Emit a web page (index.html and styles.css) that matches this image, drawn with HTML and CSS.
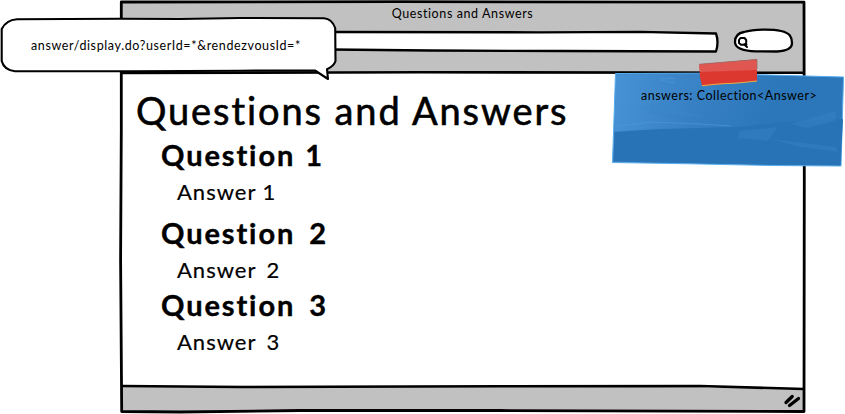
FILE: index.html
```html
<!DOCTYPE html>
<html lang="en">
<head>
<meta charset="utf-8">
<title>Questions and Answers</title>
<link rel="stylesheet" href="styles.css">
</head>
<body>
<main class="mockup">
  <section class="window">
    <svg class="frame" viewBox="0 0 845 414" aria-hidden="true">
      <path fill="#fff" d="M121 2H804V411L122 412Z"/>
      <path fill="#c1c1c1" d="M121 2H804V73H121Z M122 386L500 385.5L804 389V411L122 411Z"/>
      <g fill="none" stroke="#000" stroke-width="2.8" stroke-linejoin="round">
        <path d="M121.3 2L400 1.7L804 2.2L804.3 180L804 411.5L500 410.5L300 410.5L180 412L121.7 411.5L120.6 260L121.3 130Z"/>
        <path stroke-width="2.6" d="M121 73L420 72.3L804 72.8"/>
        <path stroke-width="2.6" d="M122 386L240 387L500 386.2L700 386L804 389"/>
      </g>
      <path fill="#fff" stroke="#000" stroke-width="2.3" stroke-linejoin="round" d="M180 32L330 32L540 32.3L640 31.8L716 33.5Q719 42 716 51.5L560 51L430 50.5L330 49.5L180 49Z"/>
      <path fill="#fff" stroke="#000" stroke-width="2.3" d="M744 32C754 29 772 29 781 31C790 33 792 37 792 43C792 49 786 51 777 51.5L756 51.3C744 51 735 49 735 42C735 37 738 33 744 32Z"/>
      <g fill="none" stroke="#000" stroke-width="2" stroke-linecap="round" stroke-linejoin="round">
        <path d="M740.5 38H744.5L746.2 40V43L744.2 44.7H741L739 43V40ZM743.5 44.5H746.5M744.8 45L747 47"/>
        <path stroke-width="3.3" d="M786 402.5L792.2 396.5M789.5 405.5L798.5 398.5"/>
      </g>
    </svg>
    <header class="toolbar"><p class="caption">Questions and Answers</p></header>
    <article class="content">
      <h1 class="title">Questions and Answers</h1>
      <h2 class="question">Question <span class="digit">1</span></h2>
      <p class="answer">Answer 1</p>
      <h2 class="question second">Question <span class="digit wide">2</span></h2>
      <p class="answer">Answer <span class="digit">2</span></p>
      <h2 class="question third">Question <span class="digit wide">3</span></h2>
      <p class="answer">Answer <span class="digit">3</span></p>
    </article>
  </section>
  <aside class="callout">
    <svg class="shape" viewBox="0 0 340 84" aria-hidden="true">
      <path fill="#fff" stroke="#000" stroke-width="2.1" stroke-linejoin="round" d="M17 19.2L120 18.7L180 19L240 18L324 18.3Q332 19 335.2 28L335.5 61Q334 66 327 69.3L328 79L315 70.5L240 70.7L130 71.3L15 71.2Q4 70 1.7 61L1.7 29Q6 20 17 19.2Z"/>
    </svg>
    <p class="callout-text">answer/display.do?userId=*&amp;rendezvousId=*</p>
  </aside>
  <aside class="note">
    <svg class="shape" viewBox="612 56 233 112" aria-hidden="true">
      <defs>
        <linearGradient id="paper" x1="0" y1="0" x2="1" y2=".2">
          <stop offset="0" stop-color="#438fd2"/><stop offset=".4" stop-color="#3780c3"/><stop offset=".75" stop-color="#2b77b9"/>
        </linearGradient>
        <linearGradient id="streak"><stop offset="0" stop-color="#4b96d7"/><stop offset="1" stop-color="#347dc0" stop-opacity=".1"/></linearGradient>
      </defs>
      <path fill="url(#paper)" stroke="#58acec" stroke-width="1" d="M615.5 73.5L700 73.2L843.5 77L841 166L770 165.5L690 163.8L612.5 162.5Z"/>
      <path fill="#2873b5" d="M614.5 132L660 129L700 128L740 127L780 122L843 119L840.5 165L690 163L613.5 161.5Z"/>
      <path fill="url(#streak)" opacity=".55" d="M616 76L674 75L690 84L710 88L700 96L650 105L650 114L690 121L718 125L680 128L650 129L615 131Z"/>
      <path fill="#3c88ca" opacity=".35" d="M695 76L725 94L690 91L664 83Z M636 106L690 99L675 108L708 118L650 113Z M740 131L778 127L768 141L738 138Z M790 124L836 111L835 121L807 128Z M771 139L836 147L838 152L796 146Z"/>
      <path fill="none" stroke="#4b98d7" stroke-width="1" opacity=".65" d="M618 126L650 122L700 124L731 126M661 79L674 78V83L661 80"/>
      <path fill="#dc3830" d="M699.3 64.2L756.8 59.3L757 81L702 86L700 77Z"/>
      <path fill="#df5750" d="M699.3 64.2L756.8 59.3L757 70L700 72Z"/>
      <path fill="none" stroke="#ecae45" stroke-width="1" d="M702 85.7L718 84L738 83L757 81"/>
      <path fill="none" stroke="#9c6b68" stroke-width=".8" d="M699.5 64.2L757 59.5V69"/>
    </svg>
    <p class="note-text">answers: Collection&lt;Answer&gt;</p>
  </aside>
</main>
</body>
</html>
```
FILE: styles.css
```css
* { box-sizing: border-box; }
body { margin: 0; background: #fff; color: #000; font-family: Lato, "Open Sans", sans-serif; overflow: hidden; }
h1, h2, p { margin: 0; white-space: nowrap; }
.mockup { position: relative; width: 845px; height: 414px; }
.window { display: flex; flex-direction: column; height: 100%; padding: 0 41px 0 121px; }
.frame { position: absolute; inset: 0; width: 845px; height: 414px; }
.toolbar { position: relative; height: 74px; padding-top: 5px; text-align: center; }
.caption { font-size: 12.5px; line-height: 17px; letter-spacing: .6px; }
.content { position: relative; padding: 11px 0 0 15px; }
.title { font-size: 38px; font-weight: 400; line-height: 50px; letter-spacing: 1.9px; -webkit-text-stroke: .6px #000; }
.question { margin-left: 25px; font-size: 29px; font-weight: 700; line-height: 40px; letter-spacing: 1.9px; -webkit-text-stroke: .4px #000; }
.answer { margin-left: 41px; font-size: 22px; line-height: 34px; letter-spacing: 1px; -webkit-text-stroke: .2px #000; }
.question .digit { margin-left: 1px; }
.question .wide { margin-left: 5px; }
.answer .digit { margin-left: 4px; }
.second { margin-top: 4px; }
.third { margin-top: -2px; }
.callout { position: absolute; left: 0; top: 0; width: 340px; height: 84px; padding: 37px 0 0 31px; }
.note { position: absolute; left: 612px; top: 56px; width: 233px; height: 112px; padding: 31px 0 0 29px; }
.shape { position: absolute; left: 0; top: 0; width: 100%; height: 100%; }
.callout-text, .note-text { position: relative; font-size: 12.5px; line-height: 17px; letter-spacing: .5px; }
.callout-text { letter-spacing: .62px; }
```
